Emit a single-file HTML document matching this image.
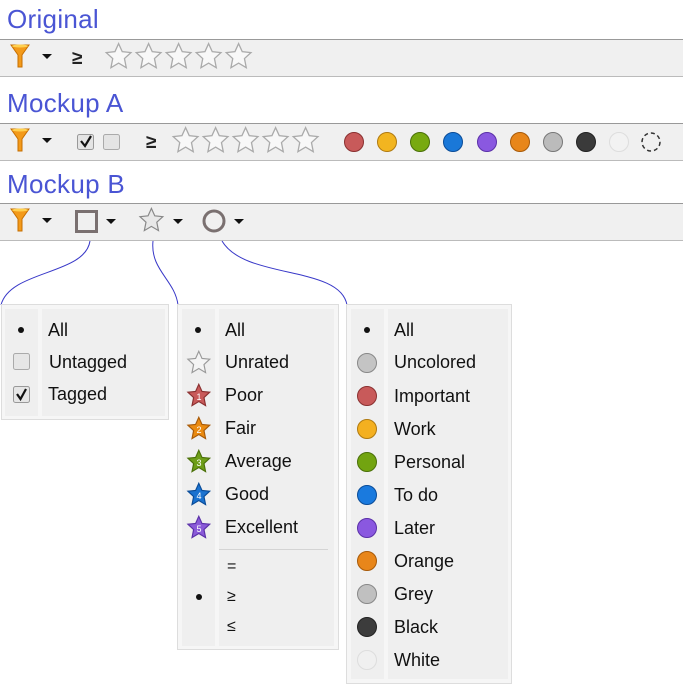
<!DOCTYPE html>
<html><head><meta charset="utf-8"><style>
*{margin:0;padding:0;box-sizing:border-box}
body{width:683px;height:683px;background:#fff;position:relative;overflow:hidden;font-family:"Liberation Sans",sans-serif}
.h{position:absolute;left:7px;font-size:26px;color:#4a55d4;letter-spacing:0.3px}
.tb{position:absolute;left:0;width:683px;height:38px;background:#f0f0f0;border-top:1px solid #999;border-bottom:1px solid #bbb}
.a{position:absolute}
.menu{position:absolute;background:#f6f6f6;border:1px solid #ddd}
.g{position:absolute;background:#efefef}
.t{position:absolute;font-size:18px;color:#111;line-height:20px}
.dot{position:absolute;width:6px;height:6px;border-radius:3px;background:#111}
</style></head><body>
<svg width="0" height="0" style="position:absolute">
<defs>
<polygon id="st" points="12,2 14.8,8.2 21.5,8.9 16.5,13.5 17.9,20.5 12,17 6.1,20.5 7.5,13.5 2.5,8.9 9.2,8.2"/>
<g id="fun"><path d="M1,2 L19,2 L12,12 L12,24 L8,24 L8,12 Z" fill="#f39a1a" stroke="#c66e00" stroke-width="1"/><ellipse cx="10" cy="3" rx="8" ry="1.5" fill="#ffd050"/></g>
<path id="tri" d="M0,0 L10,0 L5,5 Z" fill="#111"/>
</defs></svg>

<div class="h" style="top:4px">Original</div>
<div class="tb" style="top:39px"></div>
<div class="h" style="top:88px">Mockup A</div>
<div class="tb" style="top:123px"></div>
<div class="h" style="top:169px">Mockup B</div>
<div class="tb" style="top:203px"></div>

<svg class="a" style="left:0;top:0" width="683" height="683">
<use href="#fun" x="10" y="43"/><use href="#tri" x="42" y="54"/>
<text x="72" y="64" font-size="19" font-weight="bold" fill="#222" font-family="Liberation Sans">≥</text>
<g fill="#f8f8f8" stroke="#aaa" stroke-width="1">
<use href="#st" transform="translate(103,41) scale(1.3)"/><use href="#st" transform="translate(133,41) scale(1.3)"/><use href="#st" transform="translate(163,41) scale(1.3)"/><use href="#st" transform="translate(193,41) scale(1.3)"/><use href="#st" transform="translate(223,41) scale(1.3)"/>
</g>
<use href="#fun" x="10" y="127"/><use href="#tri" x="42" y="138"/>
<rect x="77.5" y="134.5" width="16" height="15" rx="2" fill="#e4e4e4" stroke="#999"/>
<path d="M81,141 L85,146 L91,136" fill="none" stroke="#111" stroke-width="2.2"/>
<rect x="103.5" y="134.5" width="16" height="15" rx="2" fill="#e4e4e4" stroke="#aaa"/>
<text x="146" y="148" font-size="19" font-weight="bold" fill="#222" font-family="Liberation Sans">≥</text>
<g fill="#f8f8f8" stroke="#aaa" stroke-width="1">
<use href="#st" transform="translate(170,125) scale(1.3)"/><use href="#st" transform="translate(200,125) scale(1.3)"/><use href="#st" transform="translate(230,125) scale(1.3)"/><use href="#st" transform="translate(260,125) scale(1.3)"/><use href="#st" transform="translate(290,125) scale(1.3)"/>
</g>
<g stroke-width="1">
<circle cx="354" cy="142" r="9.5" fill="#c85a5a" stroke="#8a3030"/>
<circle cx="387" cy="142" r="9.5" fill="#f2b520" stroke="#b07a10"/>
<circle cx="420" cy="142" r="9.5" fill="#78aa10" stroke="#4a7008"/>
<circle cx="453" cy="142" r="9.5" fill="#1a78d8" stroke="#0a4c98"/>
<circle cx="487" cy="142" r="9.5" fill="#8a58e0" stroke="#5a30a8"/>
<circle cx="520" cy="142" r="9.5" fill="#e8861a" stroke="#a85a08"/>
<circle cx="553" cy="142" r="9.5" fill="#bbb" stroke="#777"/>
<circle cx="586" cy="142" r="9.5" fill="#3a3a3a" stroke="#222"/>
<circle cx="619" cy="142" r="9.5" fill="#f2f2f2" stroke="#ddd"/>
<circle cx="651" cy="142" r="9" fill="none" stroke="#333" stroke-width="1.5" stroke-dasharray="4,3"/>
</g>
<use href="#fun" x="10" y="207"/><use href="#tri" x="42" y="218"/>
<rect x="76.5" y="211.5" width="20" height="20" fill="none" stroke="#7a7070" stroke-width="3"/>
<use href="#tri" x="106" y="219"/>
<use href="#st" transform="translate(137,206) scale(1.2)" fill="#e8e8e8" stroke="#888"/>
<use href="#tri" x="173" y="219"/>
<circle cx="214" cy="221" r="10" fill="none" stroke="#7a7070" stroke-width="3"/>
<use href="#tri" x="234" y="219"/>
<g fill="none" stroke="#3838c8" stroke-width="1">
<path d="M90,241 C85,275 10,270 1,305"/>
<path d="M153,241 C150,270 175,280 178,305"/>
<path d="M222,241 C245,280 340,265 347,305"/>
</g>
</svg>

<div class="menu" style="left:1px;top:304px;width:168px;height:116px"></div>
<div class="g" style="left:5px;top:309px;width:33px;height:107px"></div>
<div class="g" style="left:42px;top:309px;width:123px;height:107px"></div>
<div class="dot" style="left:18px;top:327px"></div>
<div class="t" style="left:48px;top:320px">All</div>
<svg class="a" style="left:13px;top:353px" width="20" height="20"><rect x="0.5" y="0.5" width="16" height="16" rx="2" fill="#e6e6e6" stroke="#aaa"/></svg>
<div class="t" style="left:49px;top:352px">Untagged</div>
<svg class="a" style="left:13px;top:386px" width="20" height="20"><rect x="0.5" y="0.5" width="16" height="16" rx="2" fill="#e6e6e6" stroke="#999"/><path d="M4,8 L7.5,13 L13,3" fill="none" stroke="#111" stroke-width="2.2"/></svg>
<div class="t" style="left:48px;top:384px">Tagged</div>

<div class="menu" style="left:177px;top:304px;width:162px;height:346px"></div>
<div class="g" style="left:182px;top:309px;width:33px;height:337px"></div>
<div class="g" style="left:219px;top:309px;width:115px;height:337px"></div>
<div class="dot" style="left:195px;top:327px"></div>
<div class="t" style="left:225px;top:320px">All</div>
<svg class="a" style="left:185px;top:349px" width="28" height="28"><use href="#st" transform="scale(1.15)" fill="#f4f4f4" stroke="#999"/></svg>
<div class="t" style="left:225px;top:352px">Unrated</div>
<svg class="a" style="left:185px;top:382px" width="28" height="132" font-family="Liberation Sans" font-size="9" fill="#fff" text-anchor="middle">
<use href="#st" transform="scale(1.15)" fill="#c85a5a" stroke="#8a3030"/><text x="14" y="18" fill="#fff">1</text>
<g transform="translate(0,33)"><use href="#st" transform="scale(1.15)" fill="#ea8a10" stroke="#a85a08"/><text x="14" y="18" fill="#fff">2</text></g>
<g transform="translate(0,66)"><use href="#st" transform="scale(1.15)" fill="#6e9e18" stroke="#4a7008"/><text x="14" y="18" fill="#fff">3</text></g>
<g transform="translate(0,99)"><use href="#st" transform="scale(1.15)" fill="#1a72d0" stroke="#0a4c98"/><text x="14" y="18" fill="#fff">4</text></g>
</svg>
<svg class="a" style="left:185px;top:514px" width="28" height="28" font-family="Liberation Sans" font-size="9" text-anchor="middle"><use href="#st" transform="scale(1.15)" fill="#8a5ad8" stroke="#5a30a8"/><text x="14" y="18" fill="#fff">5</text></svg>
<div class="t" style="left:225px;top:385px">Poor</div>
<div class="t" style="left:225px;top:418px">Fair</div>
<div class="t" style="left:225px;top:451px">Average</div>
<div class="t" style="left:225px;top:484px">Good</div>
<div class="t" style="left:225px;top:517px">Excellent</div>
<div class="a" style="left:219px;top:549px;width:109px;height:1px;background:#d4d4d4"></div>
<div class="t" style="left:227px;top:557px;font-size:16px">=</div>
<div class="dot" style="left:196px;top:594px"></div>
<div class="t" style="left:227px;top:587px;font-size:16px">≥</div>
<div class="t" style="left:227px;top:617px;font-size:16px">≤</div>

<div class="menu" style="left:346px;top:304px;width:166px;height:380px"></div>
<div class="g" style="left:351px;top:309px;width:33px;height:370px"></div>
<div class="g" style="left:388px;top:309px;width:120px;height:370px"></div>
<div class="dot" style="left:364px;top:327px"></div>
<div class="t" style="left:394px;top:320px">All</div>
<svg class="a" style="left:355px;top:350px" width="26" height="330">
<g stroke-width="1">
<circle cx="12" cy="13" r="9.5" fill="#c4c4c4" stroke="#888"/>
<circle cx="12" cy="46" r="9.5" fill="#c85a5a" stroke="#8a3030"/>
<circle cx="12" cy="79" r="9.5" fill="#f4b020" stroke="#b07a10"/>
<circle cx="12" cy="112" r="9.5" fill="#72a410" stroke="#4a7008"/>
<circle cx="12" cy="145" r="9.5" fill="#1a7ade" stroke="#0a4c98"/>
<circle cx="12" cy="178" r="9.5" fill="#8a58e0" stroke="#5a30a8"/>
<circle cx="12" cy="211" r="9.5" fill="#e8861a" stroke="#a85a08"/>
<circle cx="12" cy="244" r="9.5" fill="#c0c0c0" stroke="#888"/>
<circle cx="12" cy="277" r="9.5" fill="#3c3c3c" stroke="#222"/>
<circle cx="12" cy="310" r="9.5" fill="#f0f0f0" stroke="#ddd"/>
</g></svg>
<div class="t" style="left:394px;top:352px">Uncolored</div>
<div class="t" style="left:394px;top:386px">Important</div>
<div class="t" style="left:394px;top:419px">Work</div>
<div class="t" style="left:394px;top:452px">Personal</div>
<div class="t" style="left:394px;top:485px">To do</div>
<div class="t" style="left:394px;top:518px">Later</div>
<div class="t" style="left:394px;top:551px">Orange</div>
<div class="t" style="left:394px;top:584px">Grey</div>
<div class="t" style="left:394px;top:617px">Black</div>
<div class="t" style="left:394px;top:650px">White</div>
</body></html>
